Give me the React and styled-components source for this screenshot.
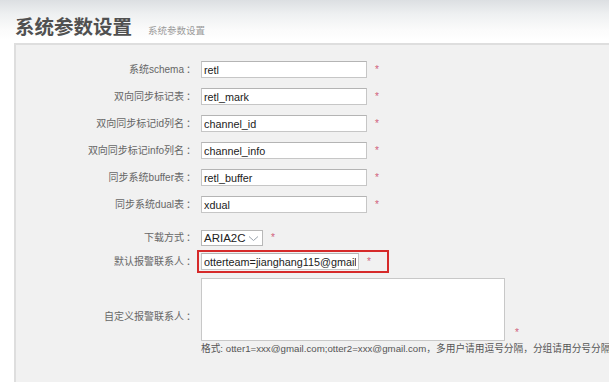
import { createGlobalStyle, styled } from "styled-components";

const GlobalStyle = createGlobalStyle`
  html, body {
    margin: 0;
    padding: 0;
    background: #fff;
  }
  body {
    font-family: "Liberation Sans", Arial, "Noto Sans CJK SC", sans-serif;
    width: 609px;
    height: 382px;
    overflow: hidden;
  }
`;

const Page = styled.div`
  display: flex;
  flex-direction: column;
  height: 382px;
`;

const Header = styled.div`
  height: 43px;
  display: flex;
  align-items: baseline;
  gap: 16px;
  padding: 11px 0 0 15px;
  box-sizing: border-box;
  background: linear-gradient(#dcdfe2 0px, #eef0f1 14px, #fbfbfb 30px, #fff 40px);
`;

const Title = styled.h1`
  margin: 0;
  font-size: 19.5px;
  font-weight: bold;
  color: #505050;
  font-family: "Noto Sans CJK SC", sans-serif;
`;

const Subtitle = styled.span`
  font-size: 9.5px;
  color: #9a9a9a;
  font-family: "Noto Sans CJK SC", sans-serif;
`;

const Panel = styled.div`
  flex: 1;
  margin-left: 14px;
  border-top: 2px solid #dedede;
  border-left: 2px solid #dedede;
  background: #f1f1f1;
  padding-top: 16px;
  overflow: hidden;
`;

const Row = styled.div`
  display: flex;
  align-items: center;
  margin-bottom: ${(p) => p.$gap ?? 10}px;
`;

const Label = styled.label`
  width: 185px;
  flex: none;
  text-align: right;
  padding-right: 8px;
  box-sizing: border-box;
  font-size: 10px;
  line-height: 14px;
  color: #666;
  font-family: "Liberation Sans", Arial, "Noto Sans CJK SC", sans-serif;
`;

const Colon = styled.span`
  display: inline-block;
  width: 7px;
  text-align: left;
  margin-left: 2px;
`;

const Field = styled.div`
  display: flex;
  align-items: ${(p) => (p.$bottom ? "flex-end" : "center")};
`;

const TextInput = styled.input`
  width: 166px;
  height: 17px;
  box-sizing: border-box;
  border: 1px solid #c6c6c6;
  border-top-color: #b4b4b4;
  background: #fff;
  padding: 0 2px;
  font-family: "Liberation Sans", Arial, sans-serif;
  font-size: 10.8px;
  color: #222;
  outline: none;
`;

const Star = styled.span`
  color: #d0607a;
  font-size: 10px;
  line-height: 12px;
  margin-left: ${(p) => p.$ml ?? 8}px;
  margin-bottom: ${(p) => (p.$bottom ? 2 : 0)}px;
`;

const SelectBox = styled.div`
  width: 62px;
  height: 16px;
  box-sizing: border-box;
  border: 1px solid #b8b8b8;
  background: #fff;
  display: flex;
  align-items: center;
  justify-content: space-between;
  padding: 0 3px 0 2px;
  font-size: 11.5px;
  color: #222;
`;

const Highlight = styled.div`
  display: flex;
  align-items: center;
  margin-left: -4px;
  padding: 1px 16px 1px 2px;
  border: 2px solid #d62a2a;
  width: 192px;
  box-sizing: border-box;
  height: 23px;
`;

const Area = styled.textarea`
  width: 304px;
  height: 63px;
  box-sizing: border-box;
  border: 1px solid #c8c8c8;
  background: #fff;
  resize: none;
  outline: none;
  display: block;
`;

const AreaWrap = styled.div`
  display: flex;
  flex-direction: column;
  gap: 2px;
`;

const Hint = styled.div`
  font-size: 9.7px;
  line-height: 12px;
  color: #555;
  white-space: nowrap;
  font-family: "Liberation Sans", Arial, "Noto Sans CJK SC", sans-serif;
`;

const fields = [
  ["系统schema", "retl"],
  ["双向同步标记表", "retl_mark"],
  ["双向同步标记id列名", "channel_id"],
  ["双向同步标记info列名", "channel_info"],
  ["同步系统buffer表", "retl_buffer"],
  ["同步系统dual表", "xdual"],
];

const Chevron = () => (
  <svg width="11" height="7" viewBox="0 0 11 7">
    <path d="M1 1.5 L5.5 5.5 L10 1.5" fill="none" stroke="#9aa3ad" strokeWidth="1" />
  </svg>
);

export default function App() {
  return (
    <Page>
      <GlobalStyle />
      <Header>
        <Title>系统参数设置</Title>
        <Subtitle>系统参数设置</Subtitle>
      </Header>
      <Panel>
        {fields.map(([label, value], i) => (
          <Row key={label} $gap={i === fields.length - 1 ? 17 : 10}>
            <Label>
              {label}
              <Colon>：</Colon>
            </Label>
            <Field>
              <TextInput defaultValue={value} />
              <Star>*</Star>
            </Field>
          </Row>
        ))}
        <Row $gap={4}>
          <Label>
            下载方式
            <Colon>：</Colon>
          </Label>
          <Field>
            <SelectBox>
              ARIA2C
              <Chevron />
            </SelectBox>
            <Star>*</Star>
          </Field>
        </Row>
        <Row $gap={5}>
          <Label>
            默认报警联系人
            <Colon>：</Colon>
          </Label>
          <Highlight>
            <TextInput defaultValue="otterteam=jianghang115@gmail.com" />
            <Star>*</Star>
          </Highlight>
        </Row>
        <Row>
          <Label>
            自定义报警联系人
            <Colon>：</Colon>
          </Label>
          <AreaWrap>
            <Field $bottom>
              <Area />
              <Star $ml={10} $bottom>*</Star>
            </Field>
            <Hint>
              格式: otter1=xxx@gmail.com;otter2=xxx@gmail.com，多用户请用逗号分隔，分组请用分号分隔
            </Hint>
          </AreaWrap>
        </Row>
      </Panel>
    </Page>
  );
}
